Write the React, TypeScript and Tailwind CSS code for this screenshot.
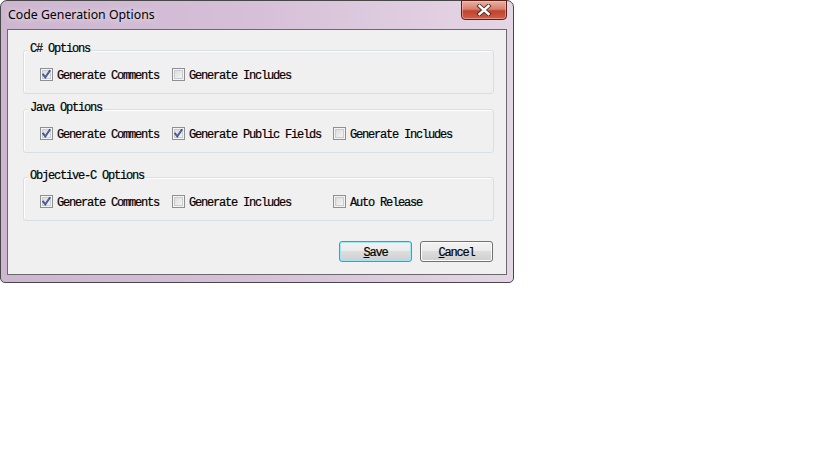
import React from "react";

const mono = { fontFamily: '"Liberation Mono", "DejaVu Sans Mono", monospace' };

function Check({ checked }: { checked?: boolean }) {
  return (
    <div className="relative w-[13px] h-[13px] shrink-0 border border-[#8e8f8f] bg-linear-to-br from-[#d6d6d6] to-[#fbfbfb] shadow-[inset_0_0_0_1px_#f4f4f4,inset_0_0_0_2px_#c9cdd1]">
      {checked && (
        <svg className="absolute left-[0px] top-[0px]" width="11" height="11" viewBox="0 0 11 11">
          <path d="M2.2 5.6 L4.3 8.3 L8.6 2" fill="none" stroke="#3a4f8a" strokeWidth="1.9" strokeLinecap="square" />
          <path d="M2.6 5.8 L4.3 8 L8.2 2.4" fill="none" stroke="#6c80b8" strokeWidth="0.6" />
        </svg>
      )}
    </div>
  );
}

function Item({ label, checked }: { label: string; checked?: boolean }) {
  return (
    <div className="flex items-center gap-[4px] h-[13px]">
      <Check checked={checked} />
      <span
        className="translate-y-[1px] text-[12px] leading-[12px] tracking-[-1.2px] text-black whitespace-pre [-webkit-text-stroke:0.2px_#000]"
        style={mono}
      >
        {label}
      </span>
    </div>
  );
}

function Group({
  title,
  className,
  children,
}: {
  title: string;
  className: string;
  children: React.ReactNode;
}) {
  return (
    <div
      className={
        "relative ml-[15px] mr-[12px] border border-[#d5dfe5] rounded-[3px] shadow-[inset_1px_1px_0_#ffffff] pt-[17px] pb-[12px] pl-[16px] " +
        className
      }
    >
      <div
        className="absolute top-[-8px] left-[4px] px-[2px] bg-[#f0f0f0] text-[12px] leading-[12px] tracking-[-1.2px] text-black whitespace-pre [-webkit-text-stroke:0.2px_#000]"
        style={mono}
      >
        {title}
      </div>
      <div className="grid grid-cols-[132px_161px_auto] items-center">{children}</div>
    </div>
  );
}

function Button({ children, primary }: { children: React.ReactNode; primary?: boolean }) {
  return (
    <div
      className={
        "w-[73px] h-[21px] rounded-[3px] border flex items-center justify-center bg-[linear-gradient(to_bottom,#f2f2f2_0%,#ebebeb_50%,#dddddd_50%,#cfcfcf_100%)] text-[12px] leading-[12px] tracking-[-1.2px] text-black [-webkit-text-stroke:0.2px_#000] " +
        (primary
          ? "border-[#3c9ad6] shadow-[inset_0_0_0_1px_#9fe6fb]"
          : "border-[#707070] shadow-[inset_0_0_0_1px_#fcfcfc]")
      }
      style={mono}
    >
      {children}
    </div>
  );
}

export default function App() {
  return (
    <div className="w-[819px] h-[460px] bg-white">
      <div className="relative w-[514px] h-[283px] rounded-t-[7px] rounded-b-[5px] border border-[#474747] bg-linear-to-r from-[#cdb6d0] via-[#d6c0d8] to-[#e4d6e5] flex flex-col">
        <div className="h-[28px] flex items-center pl-[7px]">
          <span
            className="text-[12.3px] leading-[16px] text-black [text-shadow:0_0_6px_rgba(255,255,255,0.9)]"
            style={{ fontFamily: '"Noto Sans", "Open Sans", sans-serif' }}
          >
            Code Generation Options
          </span>
        </div>
        <div className="flex-1 mx-[6px] mb-[7px] border border-[#6a6a6a] bg-[#f0f0f0] flex flex-col">
          <Group title="C# Options" className="mt-[20px]">
            <Item label="Generate Comments" checked />
            <Item label="Generate Includes" />
          </Group>
          <Group title="Java Options" className="mt-[15px]">
            <Item label="Generate Comments" checked />
            <Item label="Generate Public Fields" checked />
            <Item label="Generate Includes" />
          </Group>
          <Group title="Objective-C Options" className="mt-[24px]">
            <Item label="Generate Comments" checked />
            <Item label="Generate Includes" />
            <Item label="Auto Release" />
          </Group>
          <div className="mt-[20px] mr-[13px] flex justify-end gap-[8px]">
            <Button primary>
              <span className="translate-y-[1px]">
                <span className="underline underline-offset-[1px]">S</span>ave
              </span>
            </Button>
            <Button>
              <span className="translate-y-[1px]">
                <span className="underline underline-offset-[1px]">C</span>ancel
              </span>
            </Button>
          </div>
        </div>
        <div className="absolute top-[-1px] right-[6px] w-[46px] h-[20px] rounded-b-[4px] border border-[#5a2018] bg-[linear-gradient(to_bottom,#e8b1a3_0%,#d88070_45%,#c2432c_55%,#cf5f48_100%)] shadow-[inset_0_0_0_1px_rgba(255,200,190,0.5)] flex items-center justify-center">
          <svg width="16" height="12" viewBox="0 0 16 12">
            <path d="M3.5 2 L12.5 10 M12.5 2 L3.5 10" stroke="#4a2a24" strokeWidth="4.2" strokeLinecap="square" />
            <path d="M3.5 2 L12.5 10 M12.5 2 L3.5 10" stroke="#ffffff" strokeWidth="2.4" strokeLinecap="square" />
          </svg>
        </div>
      </div>
    </div>
  );
}
